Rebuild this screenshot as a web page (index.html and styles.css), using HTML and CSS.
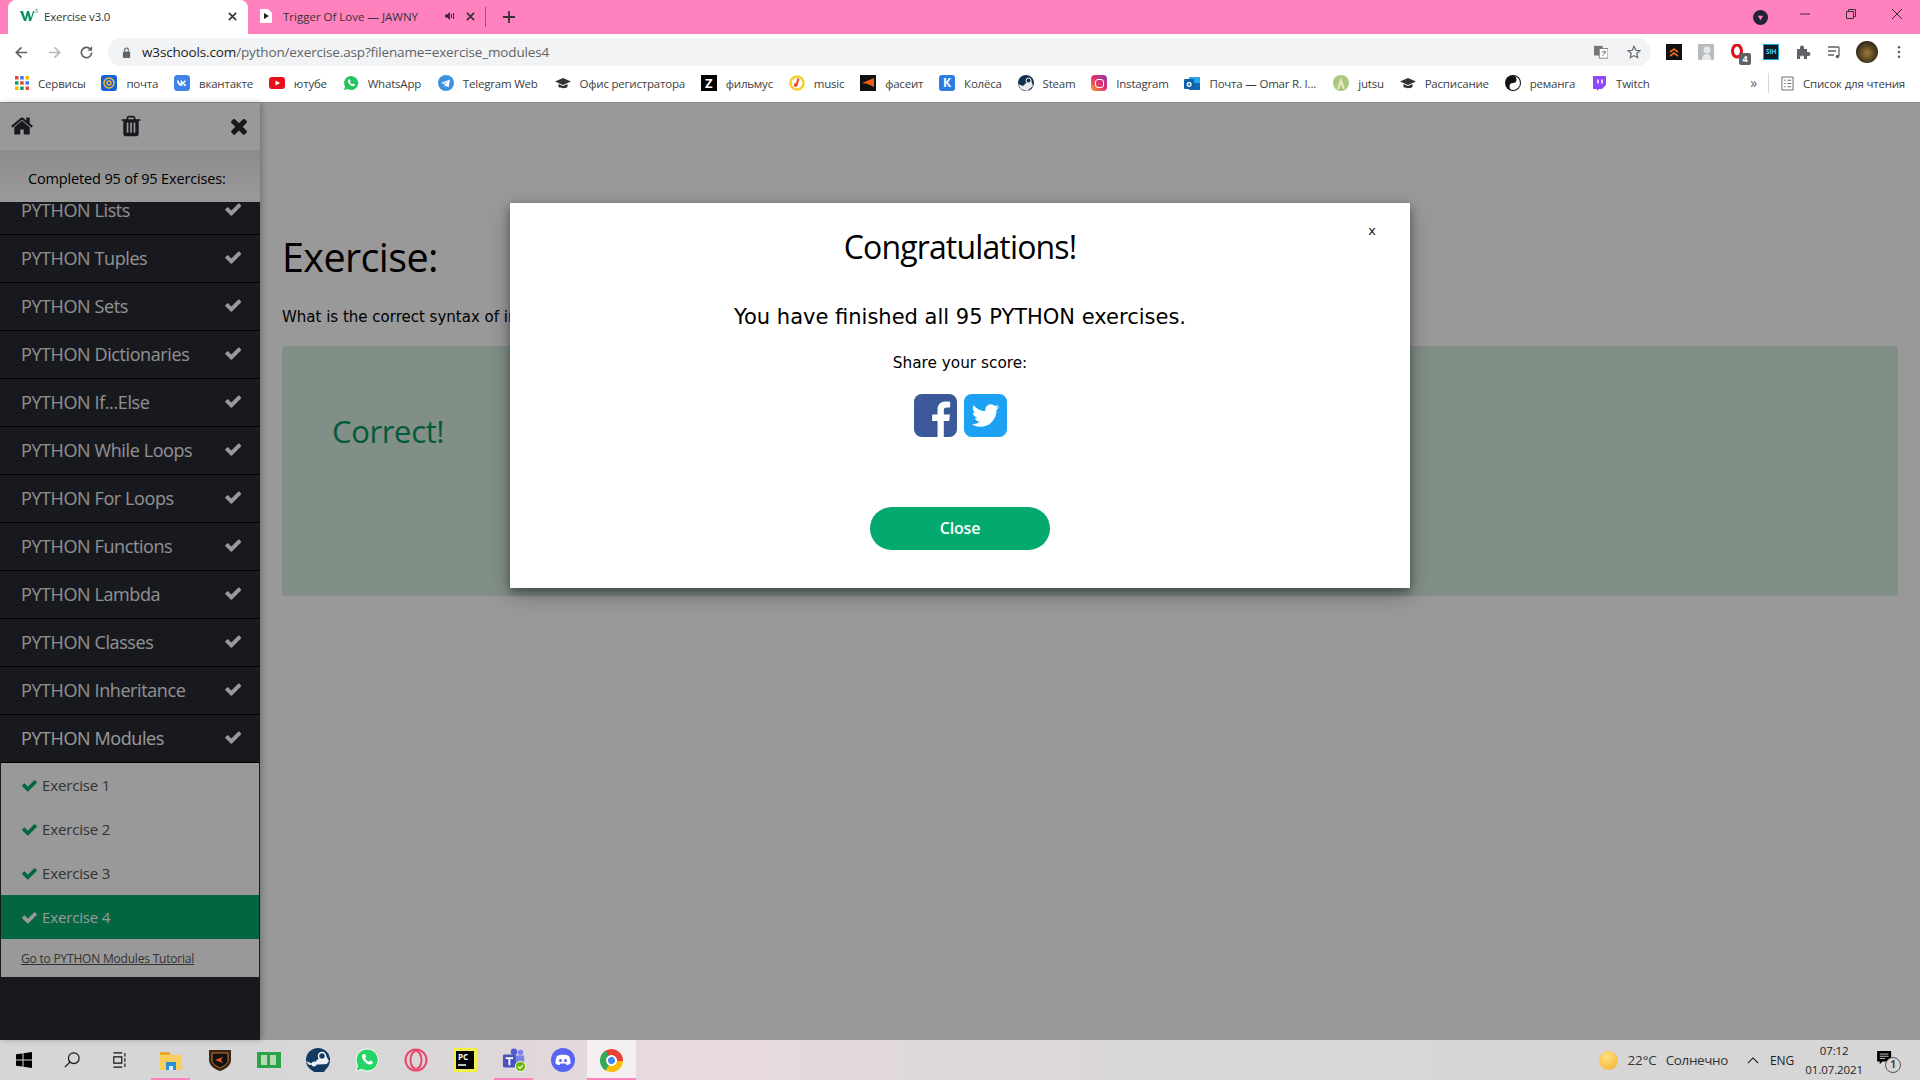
FILE: index.html
```html
<!DOCTYPE html>
<html lang="ru">
<head>
<meta charset="utf-8">
<title>Exercise v3.0</title>
<link rel="stylesheet" href="styles.css">
</head>
<body>
<svg class="defs" width="0" height="0">
  <symbol id="i-check" viewBox="0 0 1792 1792"><path d="M1671 566q0 40-28 68l-724 724-136 136q-28 28-68 28t-68-28l-136-136-362-362q-28-28-28-68t28-68l136-136q28-28 68-28t68 28l294 295 656-657q28-28 68-28t68 28l136 136q28 28 28 68z"/></symbol>
  <symbol id="i-times" viewBox="0 0 1792 1792"><path d="M1490 1322q0 40-28 68l-136 136q-28 28-68 28t-68-28l-294-294-294 294q-28 28-68 28t-68-28l-136-136q-28-28-28-68t28-68l294-294-294-294q-28-28-28-68t28-68l136-136q28-28 68-28t68 28l294 294 294-294q28-28 68-28t68 28l136 136q28 28 28 68t-28 68l-294 294 294 294q28 28 28 68z"/></symbol>
  <symbol id="i-home" viewBox="0 0 1792 1792"><path d="M1472 992v480q0 26-19 45t-45 19h-384v-384h-256v384h-384q-26 0-45-19t-19-45v-480q0-1 .5-3t.5-3l575-474 575 474q1 2 1 6zm223-69l-62 74q-8 9-21 11h-3q-13 0-21-7l-692-577-692 577q-12 8-24 7-13-2-21-11l-62-74q-8-10-7-23.500t11-21.500l719-599q32-26 76-26t76 26l244 204v-195q0-14 9-23t23-9h192q14 0 23 9t9 23v408l219 182q10 8 11 21.500t-7 23.500z"/></symbol>
  <symbol id="i-trash" viewBox="0 0 1792 1792"><path d="M704 1376v-704q0-14-9-23t-23-9h-64q-14 0-23 9t-9 23v704q0 14 9 23t23 9h64q14 0 23-9t9-23zm256 0v-704q0-14-9-23t-23-9h-64q-14 0-23 9t-9 23v704q0 14 9 23t23 9h64q14 0 23-9t9-23zm256 0v-704q0-14-9-23t-23-9h-64q-14 0-23 9t-9 23v704q0 14 9 23t23 9h64q14 0 23-9t9-23zm-544-992h448l-48-117q-7-9-17-11h-317q-10 2-17 11zm928 32v64q0 14-9 23t-23 9h-96v948q0 83-47 143.500t-113 60.500h-832q-66 0-113-58.500t-47-141.500v-952h-96q-14 0-23-9t-9-23v-64q0-14 9-23t23-9h309l70-167q15-37 54-63t79-26h320q40 0 79 26t54 63l70 167h309q14 0 23 9t9 23z"/></symbol>
  <symbol id="i-bird" viewBox="0 0 1792 1792"><path d="M1684 408q-67 98-162 167 1 14 1 42 0 130-38 259.500t-115.500 248.500-184.500 210.500-258 146-323 54.500q-271 0-496-145 35 4 78 4 225 0 401-138-105-2-188-64.500t-114-159.500q33 5 61 5 43 0 85-11-112-23-185.500-111.500t-73.500-205.500v-4q68 38 146 41-66-44-105-115t-39-154q0-88 44-163 121 149 294.500 238.500t371.500 99.500q-8-38-8-74 0-134 94.500-228.500t228.500-94.500q140 0 236 102 109-21 205-78-37 115-142 178 91-10 182-49z"/></symbol>
  <symbol id="i-cap" viewBox="0 0 16 16"><path d="M8 3 0 6.500 8 10l8-3.500z"/><path d="M3.500 9v3c2 1.600 7 1.600 9 0V9L8 11z"/></symbol>
</svg>

<div class="browser">
  <header class="tabstrip">
    <div class="tab tab-active">
      <svg class="fav" viewBox="0 0 18 16"><path d="M0 3h3l2 7 2-7h2l2 7 2-7h1.500L11 13H9L8 7l-2 6H4z" fill="#0a8f5f"/><text x="14.500" y="5" class="sup">3</text></svg>
      <span class="tab-title">Exercise v3.0</span>
      <svg class="tab-x" viewBox="0 0 10 10"><path d="M1 1l8 8M9 1l-8 8"/></svg>
    </div>
    <div class="tab tab-other">
      <svg class="fav-doc" viewBox="0 0 14 16"><path d="M2 1h7l4 4v9a1 1 0 0 1-1 1H2a1 1 0 0 1-1-1V2a1 1 0 0 1 1-1z" fill="#fff"/><path d="M5 5l5 3-5 3z" fill="#222"/></svg>
      <span class="tab-title wide">Trigger Of Love — JAWNY</span>
      <svg class="speaker" viewBox="0 0 10 10"><path d="M0 3.500h2L5 1v8L2 6.500H0z" fill="#333"/><path d="M6.500 3v4M8.500 2v6" stroke="#333" fill="none"/></svg>
      <svg class="tab-x" viewBox="0 0 10 10"><path d="M1 1l8 8M9 1l-8 8"/></svg>
    </div>
    <span class="tab-sep"></span>
    <svg class="plus" viewBox="0 0 12 12"><path d="M6 0v12M0 6h12"/></svg>
    <div class="win-controls">
      <span class="profile-dot"><svg viewBox="0 0 10 10"><path d="M2 3h6L5 8z" fill="#ff82bf"/></svg></span>
      <svg class="win-btn" viewBox="0 0 12 12"><path d="M1 6h10"/></svg>
      <svg class="win-btn" viewBox="0 0 12 12"><path d="M1.500 3.500h7v7h-7zM3.500 3.500v-2h7v7h-2"/></svg>
      <svg class="win-btn" viewBox="0 0 12 12"><path d="M1 1l10 10M11 1L1 11"/></svg>
    </div>
  </header>

  <div class="toolbar">
    <svg class="nav" viewBox="0 0 16 16"><path d="M14 8H3M8 2.500 2.500 8 8 13.500"/></svg>
    <svg class="nav nav-off" viewBox="0 0 16 16"><path d="M2 8h11M8 2.500 13.500 8 8 13.500"/></svg>
    <svg class="nav" viewBox="0 0 16 16"><path d="M13.500 8A5.500 5.500 0 1 1 12 4.200"/><path class="solid" d="M14 1v5H9z"/></svg>
    <div class="omnibox">
      <svg class="lock" viewBox="0 0 10 12"><path d="M1 5h8v7H1z" fill="#5f6368"/><path d="M3 5V3a2 2 0 0 1 4 0v2" fill="none" stroke="#5f6368" stroke-width="1.300"/></svg>
      <span class="url"><b>w3schools.com</b>/python/exercise.asp?filename=exercise_modules4</span>
      <span class="omni-right">
        <svg class="translate" viewBox="0 0 16 16"><rect x="0" y="1" width="10" height="11" fill="#777"/><rect x="6" y="4" width="10" height="11" fill="#fff" stroke="#777"/><path d="M9 8h5M11.500 6.500v1.500M13 8c-.5 2-2 3.500-3.500 4" stroke="#666" fill="none"/></svg>
        <svg class="star" viewBox="0 0 16 16"><path d="M8 1.500l2 4.500 4.800.5-3.600 3.200 1 4.800L8 12.100l-4.200 2.400 1-4.800L1.200 6.500 6 6z"/></svg>
      </span>
    </div>
    <div class="exts">
      <span class="ext ext-black"><svg viewBox="0 0 16 16"><path d="M4 8l4-3 4 3M4 12l4-3 4 3" fill="none" stroke="#e8691c" stroke-width="1.600"/></svg></span>
      <span class="ext ext-grey"><svg viewBox="0 0 16 16"><rect width="16" height="16" rx="1" fill="#b9bcbf"/><circle cx="9" cy="6" r="3.500" fill="#e6e8ea"/><path d="M4 16c0-5 3-6 5-6s4 2 4 6z" fill="#e6e8ea"/></svg></span>
      <span class="ext ext-opera"><svg viewBox="0 0 16 16"><ellipse cx="7" cy="7" rx="4.500" ry="6" fill="none" stroke="#e0101a" stroke-width="3"/></svg><span class="ext-badge">4</span></span>
      <span class="ext ext-sih">SIH</span>
      <svg class="ext puzzle" viewBox="0 0 16 16"><path d="M2 5h3V3.500a2 2 0 0 1 4 0V5h3v3h1.500a2 2 0 0 1 0 4H12v3H9v-1.500a2 2 0 0 0-4 0V15H2z" fill="#5f6368"/></svg>
      <svg class="ext queue" viewBox="0 0 16 16"><path d="M1 3h11M1 7h8M1 11h6M12 3v9" fill="none" stroke="#5f6368" stroke-width="1.300"/><circle cx="10.500" cy="12.500" r="1.800" fill="#5f6368"/></svg>
      <span class="avatar"></span>
      <svg class="ext kebab" viewBox="0 0 4 16"><circle cx="2" cy="2.500" r="1.500"/><circle cx="2" cy="8" r="1.500"/><circle cx="2" cy="13.500" r="1.500"/></svg>
    </div>
  </div>

  <nav class="bookmarks">
    <a class="bm b-servisy"><svg class="bi" viewBox="0 0 14 14"><g><rect width="3.500" height="3.500" fill="#e8453c"/><rect x="5.200" width="3.500" height="3.500" fill="#3c7df0"/><rect x="10.500" width="3.500" height="3.500" fill="#f4b400"/><rect y="5.200" width="3.500" height="3.500" fill="#0f9d58"/><rect x="5.200" y="5.200" width="3.500" height="3.500" fill="#e8453c"/><rect x="10.500" y="5.200" width="3.500" height="3.500" fill="#3c7df0"/><rect y="10.500" width="3.500" height="3.500" fill="#f4b400"/><rect x="5.200" y="10.500" width="3.500" height="3.500" fill="#0f9d58"/><rect x="10.500" y="10.500" width="3.500" height="3.500" fill="#e8453c"/></g></svg><span>Сервисы</span></a>
    <a class="bm b-pochta"><svg class="bi" viewBox="0 0 16 16"><rect width="16" height="16" rx="3" fill="#1463d6"/><circle cx="8" cy="8" r="5" fill="none" stroke="#f5b73d" stroke-width="1.500"/><circle cx="8" cy="8" r="2" fill="none" stroke="#f5b73d" stroke-width="1.300"/></svg><span>почта</span></a>
    <a class="bm b-vk"><svg class="bi" viewBox="0 0 16 16"><rect width="16" height="16" rx="3.500" fill="#3f83e8"/><path d="M3 5.500h1.700c.3 2 1.200 3 2 3.200V5.500h1.600v2c.8-.1 1.500-1 1.900-2h1.600c-.3 1.300-1.100 2.300-1.800 2.800.8.400 1.700 1.200 2.200 2.700h-1.800c-.4-1-1.200-1.800-2.100-1.900V11H7.700C5 11 3.200 8.800 3 5.500z" fill="#fff"/></svg><span>вкантакте</span></a>
    <a class="bm b-yt"><svg class="bi" viewBox="0 0 16 16"><rect y="2" width="16" height="12" rx="3" fill="#e5101c"/><path d="M6.500 5.500 11 8l-4.500 2.500z" fill="#fff"/></svg><span>ютубе</span></a>
    <a class="bm b-wa"><svg class="bi" viewBox="0 0 16 16"><path d="M8 1a7 7 0 0 0-6 10.500L1 15l3.600-1A7 7 0 1 0 8 1z" fill="#25c45f"/><path d="M5.500 4.500c-1 1-.8 2.500.4 4s3 2.800 4.400 2.700c1 0 1.800-1 1.700-1.700l-1.700-1-.8.800c-1-.3-2-1.300-2.500-2.400l.8-.8-.9-1.700z" fill="#fff"/></svg><span>WhatsApp</span></a>
    <a class="bm b-tg"><svg class="bi" viewBox="0 0 16 16"><circle cx="8" cy="8" r="8" fill="#3b93df"/><path d="M3 8l9-3.500-1.500 8L8 10.500 6.700 12l-.3-2.500 4-3.500-5 3z" fill="#fff"/></svg><span>Telegram Web</span></a>
    <a class="bm b-office"><svg class="bi" viewBox="0 0 16 16" fill="#333"><use href="#i-cap"/></svg><span>Офис регистратора</span></a>
    <a class="bm b-z"><span class="bi bi-z">Z</span><span>фильмус</span></a>
    <a class="bm b-music"><svg class="bi" viewBox="0 0 16 16"><circle cx="8" cy="8" r="6.500" fill="#fff" stroke="#f5cf2f" stroke-width="2.500"/><path d="M8 11.500a2 2 0 1 1-1-3.500L8.500 3l2 1-1.500 5z" fill="#ef4b33"/></svg><span>music</span></a>
    <a class="bm b-faceit"><svg class="bi" viewBox="0 0 16 16"><rect width="16" height="16" fill="#111"/><path d="M14 3v9L8 9 2 8z" fill="#ee5f14"/></svg><span>фасеит</span></a>
    <a class="bm b-kolesa"><span class="bi bi-k">К</span><span>Колёса</span></a>
    <a class="bm b-steam"><svg class="bi" viewBox="0 0 16 16"><circle cx="8" cy="8" r="8" fill="#14304f"/><path d="M0 9l5 2 3-3 5-3 2 6-6 5-6-2z" fill="#fff" opacity=".9"/><circle cx="10.500" cy="5.500" r="2.500" fill="#14304f" stroke="#fff"/></svg><span>Steam</span></a>
    <a class="bm b-insta"><span class="bi bi-insta"><span></span></span><span>Instagram</span></a>
    <a class="bm b-outlook"><svg class="bi" viewBox="0 0 16 16"><rect x="5" y="2" width="11" height="12" fill="#28a8ea"/><rect x="5" y="8" width="11" height="7" fill="#0d6ab8"/><rect y="4" width="10" height="10" rx="1" fill="#0e5ea8"/><text x="5" y="12" class="oltext">o</text></svg><span class="ol-name">Почта — Omar R. I...</span></a>
    <a class="bm b-jutsu"><svg class="bi" viewBox="0 0 16 16"><circle cx="8" cy="8" r="8" fill="#a9c97a"/><path d="M8 2 4 14h2l2-5 2 5h2z" fill="#efe6c8"/></svg><span>jutsu</span></a>
    <a class="bm b-rasp"><svg class="bi" viewBox="0 0 16 16" fill="#333"><use href="#i-cap"/></svg><span>Расписание</span></a>
    <a class="bm b-remanga"><svg class="bi" viewBox="0 0 16 16"><circle cx="8" cy="8" r="8" fill="#111"/><path d="M8 1a3.500 3.500 0 0 1 0 7 3.500 3.500 0 0 0 0 7A7 7 0 0 0 8 1z" fill="#fff"/></svg><span>реманга</span></a>
    <a class="bm b-twitch"><svg class="bi" viewBox="0 0 16 16"><path d="M2 1h13v9l-4 4H8l-2 2v-2H2z" fill="#9146ff"/><path d="M7 4.500v4M11 4.500v4" stroke="#fff" stroke-width="1.500"/></svg><span>Twitch</span></a>
    <span class="bm-more">»</span>
    <span class="bm-sep"></span>
    <a class="bm b-reader"><svg class="bi reader" viewBox="0 0 14 16"><path d="M1 1h12v14H1zM3.500 4.500H5M7 4.500h4M3.500 8H5M7 8h4M3.500 11.500H5M7 11.500h4" fill="none" stroke="#5f6368"/></svg><span>Список для чтения</span></a>
  </nav>

  <div class="page">
    <aside class="sidebar">
      <div class="side-tools">
        <svg class="tool"><use href="#i-home"/></svg>
        <svg class="tool"><use href="#i-trash"/></svg>
        <svg class="tool"><use href="#i-times"/></svg>
      </div>
      <div class="side-progress">Completed 95 of 95 Exercises:</div>
      <ul class="chapters">
        <li class="chapter">PYTHON Lists<svg class="chk"><use href="#i-check"/></svg></li>
        <li class="chapter">PYTHON Tuples<svg class="chk"><use href="#i-check"/></svg></li>
        <li class="chapter">PYTHON Sets<svg class="chk"><use href="#i-check"/></svg></li>
        <li class="chapter">PYTHON Dictionaries<svg class="chk"><use href="#i-check"/></svg></li>
        <li class="chapter">PYTHON If...Else<svg class="chk"><use href="#i-check"/></svg></li>
        <li class="chapter">PYTHON While Loops<svg class="chk"><use href="#i-check"/></svg></li>
        <li class="chapter">PYTHON For Loops<svg class="chk"><use href="#i-check"/></svg></li>
        <li class="chapter">PYTHON Functions<svg class="chk"><use href="#i-check"/></svg></li>
        <li class="chapter">PYTHON Lambda<svg class="chk"><use href="#i-check"/></svg></li>
        <li class="chapter">PYTHON Classes<svg class="chk"><use href="#i-check"/></svg></li>
        <li class="chapter">PYTHON Inheritance<svg class="chk"><use href="#i-check"/></svg></li>
        <li class="chapter chapter-open">PYTHON Modules<svg class="chk"><use href="#i-check"/></svg></li>
      </ul>
      <div class="subs">
        <div class="sub"><svg class="subchk"><use href="#i-check"/></svg>Exercise 1</div>
        <div class="sub"><svg class="subchk"><use href="#i-check"/></svg>Exercise 2</div>
        <div class="sub"><svg class="subchk"><use href="#i-check"/></svg>Exercise 3</div>
        <div class="sub sub-active"><svg class="subchk"><use href="#i-check"/></svg>Exercise 4</div>
        <a class="sub-link">Go to PYTHON Modules Tutorial</a>
      </div>
    </aside>
    <main class="main">
      <h1 class="ex-title">Exercise:</h1>
      <p class="ex-q">What is the correct syntax of importing only the person1 dictionary of the "mymodule" module?</p>
      <div class="ex-box"><h2 class="ex-ok">Correct!</h2></div>
    </main>
    <div class="overlay">
      <section class="modal">
        <span class="modal-x">x</span>
        <h2 class="m-title">Congratulations!</h2>
        <p class="m-text">You have finished all 95 PYTHON exercises.</p>
        <p class="m-share">Share your score:</p>
        <div class="m-icons">
          <svg class="soc" viewBox="0 0 44 44"><rect width="44" height="44" rx="8" fill="#3b5998"/><path d="M30.500 44V27.500h5.500l.8-6.500h-6.300v-4c0-1.900.6-3.100 3.200-3.100h3.300V8.100c-.6-.1-2.600-.3-4.800-.3-4.800 0-8.100 2.900-8.100 8.300V21h-5.500v6.500h5.500V44z" fill="#fff"/></svg>
          <svg class="soc" viewBox="0 0 44 44"><rect width="44" height="44" rx="8" fill="#1da1f2"/><svg x="6" y="6" width="32" height="32" fill="#fff"><use href="#i-bird"/></svg></svg>
        </div>
        <button class="m-close">Close</button>
      </section>
    </div>
  </div>

  <footer class="taskbar">
    <div class="tile t-s"><svg class="ti" viewBox="0 0 16 16"><path d="M0 2.300 6.500 1.400V7.500H0zM7.500 1.300 16 0v7.500H7.500zM0 8.500h6.500v6.100L0 13.700zM7.500 8.500H16V16l-8.500-1.200z" fill="#000"/></svg></div>
    <div class="tile t-s"><svg class="ti" viewBox="0 0 18 18"><circle cx="11" cy="7" r="6" fill="none" stroke="#111" stroke-width="1.300"/><path d="M6.500 11.500 1 17" stroke="#111" stroke-width="1.300"/></svg></div>
    <div class="tile t-s t-last"><svg class="ti" viewBox="0 0 18 18"><path d="M1.500 1h10M1.500 17h10M2 5.500h9v7H2zM14.500 1v4M14.500 7v4M14.500 13v4" fill="none" stroke="#111" stroke-width="1.300"/></svg></div>
    <div class="tile t-on"><svg class="ti big" viewBox="0 0 24 24"><path d="M1 4h9l2 3H1z" fill="#e8a92a"/><path d="M1 7h22v15H1z" fill="#f8cf5d"/><path d="M7 14h10v8H7z" fill="#2a8fd8"/><path d="M10 18h4v4h-4z" fill="#d8effc"/></svg></div>
    <div class="tile"><svg class="ti big" viewBox="0 0 24 24"><path d="M1 2h22v10c0 5-5 9-11 11C6 21 1 17 1 12z" fill="#3a2413"/><path d="M4 5h16v7c0 4-4 6-8 8-4-2-8-4-8-8z" fill="#111" stroke="#c07a2a"/><path d="M7 12l8-3-2 3 2 3z" fill="#e85a1a"/></svg></div>
    <div class="tile"><svg class="ti big" viewBox="0 0 24 16"><rect width="24" height="16" fill="#2ea44a"/><rect x="4" y="3" width="6" height="10" fill="#b9d8b4"/><rect x="13" y="3" width="6" height="10" fill="#b9d8b4"/></svg></div>
    <div class="tile"><svg class="ti big" viewBox="0 0 24 24"><circle cx="12" cy="12" r="12" fill="#123a63"/><path d="M0 13l7 3 4-4 8-6 4 7-8 11H8z" fill="#e9f0f5"/><path d="M1 17l7 7h10l5-8z" fill="#123a63"/><circle cx="16" cy="8" r="3.500" fill="#123a63" stroke="#fff" stroke-width="1.500"/><circle cx="8" cy="16" r="2.500" fill="#e9f0f5"/></svg></div>
    <div class="tile"><svg class="ti big" viewBox="0 0 24 24"><path d="M12 1a11 11 0 0 0-9.500 16.500L1 23l5.700-1.500A11 11 0 1 0 12 1z" fill="#25d366" stroke="#fff"/><path d="M8 6c-1.500 1.500-1.200 4 .6 6.500s4.500 4.200 6.800 4c1.500-.1 2.700-1.500 2.600-2.600l-2.700-1.500-1.200 1.300c-1.500-.5-3.200-2-4-3.800l1.200-1.200L10 6z" fill="#fff"/></svg></div>
    <div class="tile"><svg class="ti big" viewBox="0 0 24 24"><circle cx="12" cy="12" r="10.500" fill="none" stroke="#e9486c" stroke-width="2"/><ellipse cx="12" cy="12" rx="5.500" ry="9" fill="none" stroke="#e9486c" stroke-width="2"/></svg></div>
    <div class="tile"><svg class="ti big" viewBox="0 0 24 24"><rect width="24" height="24" fill="#f2ee4a"/><rect x="3" y="3" width="18" height="18" fill="#000"/><text x="5" y="12" class="pc">PC</text><path d="M5 17h8" stroke="#fff" stroke-width="1.500"/></svg></div>
    <div class="tile t-on"><svg class="ti big" viewBox="0 0 26 26"><circle cx="20" cy="5" r="3" fill="#7b83eb"/><circle cx="13" cy="4" r="3.500" fill="#5059c9"/><path d="M14 8h10v9a5 5 0 0 1-10 0z" fill="#7b83eb"/><rect x="1" y="7" width="14" height="14" rx="1.500" fill="#4b53bc"/><path d="M4 10h8v1.800H9v7H7v-7H4z" fill="#fff"/><circle cx="20" cy="20" r="5.500" fill="#6bb700" stroke="#fff"/><path d="M17.500 20l2 2 3-3.500" stroke="#fff" fill="none" stroke-width="1.300"/></svg></div>
    <div class="tile"><svg class="ti big" viewBox="0 0 24 24"><circle cx="12" cy="12" r="12" fill="#5865f2"/><path d="M6 8c3-1.700 9-1.700 12 0 1.200 2.500 1.700 5 1.500 7.500-1.500 1-3 1.500-4 1.500l-1-1.500h-5l-1 1.500c-1 0-2.500-.5-4-1.500C4.300 13 4.800 10.500 6 8z" fill="#fff"/><circle cx="9.500" cy="12.500" r="1.500" fill="#5865f2"/><circle cx="14.500" cy="12.500" r="1.500" fill="#5865f2"/></svg></div>
    <div class="tile t-on t-current"><span class="chrome"><span></span></span></div>
    <div class="tray">
      <span class="sun"></span>
      <span class="temp">22°C</span>
      <span class="weather">Солнечно</span>
      <svg class="caret" viewBox="0 0 14 8"><path d="M1 7l6-6 6 6"/></svg>
      <span class="lang">ENG</span>
      <span class="clock"><span>07:12</span><span>01.07.2021</span></span>
      <span class="notif"><svg viewBox="0 0 18 16"><path d="M0 0h16v12H6l-3 3v-3H0z" fill="#000"/><path d="M3 3.500h10M3 6h10M3 8.500h6" stroke="#ddd"/></svg><span class="notif-n">1</span></span>
    </div>
  </footer>
</div>
</body>
</html>
```

FILE: styles.css
```css
* { box-sizing: border-box; }
html, body { margin: 0; height: 100%; overflow: hidden; }
body { font-family: "Open Sans", "Noto Sans", sans-serif; color: #000; }
.defs { position: absolute; }
.browser { display: flex; flex-direction: column; height: 1080px; width: 1920px; }

/* tab strip */
.tabstrip { height: 34px; background: #ff82bf; display: flex; align-items: stretch; flex: none; padding-left: 8px; }
.tab { width: 240px; display: flex; align-items: center; font-size: 11.5px; letter-spacing: -.2px; color: #333; padding-bottom: 2px; }
.tab-active { background: #fff; border-radius: 8px 8px 0 0; padding: 0 11px 2px 12px; }
.tab-other { width: 238px; padding: 0 0 2px 11px; }
.fav { width: 18px; height: 16px; margin-right: 6px; flex: none; }
.sup { font-size: 6px; fill: #0a8f5f; }
.fav-doc { width: 14px; height: 16px; margin-right: 10px; flex: none; }
.tab-title { flex: 1; }
.tab-title.wide { flex: none; width: 162px; letter-spacing: 0; white-space: nowrap; }
.speaker { width: 10px; height: 10px; flex: none; }
.tab-x { width: 9px; height: 9px; margin-left: auto; flex: none; fill: none; stroke: #333; stroke-width: 1.800; }
.tab-other .tab-x { margin-left: 11px; }
.tab-sep { width: 1px; height: 20px; background: #8a5a72; align-self: center; margin-left: -1px; flex: none; }
.plus { width: 12px; height: 12px; align-self: center; margin-left: 17px; stroke: #333; stroke-width: 1.800; fill: none; flex: none; }
.win-controls { margin-left: auto; display: flex; align-items: flex-start; padding: 8px 17px 0 0; gap: 34px; }
.profile-dot { width: 15px; height: 15px; border-radius: 50%; background: #232338; display: flex; align-items: center; justify-content: center; margin: 2px -3px 0 0; }
.profile-dot svg { width: 9px; height: 9px; }
.win-btn { width: 12px; height: 12px; fill: none; stroke: #333; stroke-width: 1; }

/* toolbar */
.toolbar { height: 32px; background: #fff; display: flex; align-items: flex-end; flex: none; padding-left: 14px; }
.nav { width: 15px; height: 15px; fill: none; stroke: #5f6368; stroke-width: 1.800; margin: 0 17.500px 6px 0; flex: none; }
.nav .solid { fill: #5f6368; stroke: none; }
.nav-off { stroke: #b5b8bb; }
.omnibox { width: 1543px; height: 28px; margin-left: -3.500px; background: #f1f3f4; border-radius: 14px; display: flex; align-items: center; padding: 0 10px 0 14px; flex: none; margin-right: 15px; }
.lock { width: 9px; height: 11px; margin-right: 11px; flex: none; }
.url { font-size: 13.500px; letter-spacing: -.15px; color: #5f6368; white-space: nowrap; }
.url b { font-weight: 400; color: #202124; }
.omni-right { margin-left: auto; display: flex; align-items: center; gap: 19px; }
.translate { width: 14px; height: 14px; }
.star { width: 14px; height: 14px; fill: none; stroke: #5f6368; stroke-width: 1.300; }
.exts { display: flex; align-items: center; height: 28px; }
.ext { width: 16px; height: 16px; flex: none; margin-right: 16px; display: block; }
.ext svg { display: block; width: 16px; height: 16px; }
.ext-black { background: #111; }
.ext-opera { position: relative; margin-right: 17px; }
.ext-badge { position: absolute; right: -5px; bottom: -5px; width: 12px; height: 12px; background: #5f6368; border-radius: 2px; color: #fff; font-size: 9px; font-weight: 700; line-height: 12px; text-align: center; }
.ext-sih { background: #111a24; color: #3fd0ee; font-size: 7px; font-weight: 700; line-height: 14px; text-align: center; border: 1px solid #18a6cc; letter-spacing: -.3px; }
.queue { margin-right: 13px; }
.avatar { width: 22px; height: 22px; border-radius: 50%; background: radial-gradient(circle at 50% 55%, #a37a3f 0, #5f4a22 40%, #2a2417 75%); margin-right: 19px; flex: none; }
.kebab { width: 4px; height: 14px; fill: #5f6368; margin: 0; }

/* bookmarks */
.bookmarks { height: 37px; background: #fff; border-bottom: 1px solid #8a8a8a; display: flex; align-items: center; padding: 0 0 2px 15px; flex: none; font-size: 11.500px; letter-spacing: -.2px; color: #3c4043; white-space: nowrap; }
.bm { display: flex; align-items: center; gap: 9px; margin-right: 15.800px; }
.bi { width: 16px; height: 16px; flex: none; display: block; }
.b-servisy .bi { width: 14px; height: 14px; }
.b-tg, .b-office { margin-left: 1px; }
.bi-z { background: #000; color: #fff; font-weight: 700; font-size: 13px; line-height: 16px; text-align: center; letter-spacing: 0; }
.bi-k { background: #2b7de0; color: #fff; font-weight: 700; font-size: 12px; line-height: 16px; text-align: center; border-radius: 3px; letter-spacing: 0; }
.bi-insta { border-radius: 4px; background: linear-gradient(45deg, #f9a13a, #e1306c 50%, #8a3ab9); display: flex; align-items: center; justify-content: center; }
.bi-insta span { width: 9px; height: 9px; border: 1.500px solid #fff; border-radius: 3px; display: block; }
.oltext { font-size: 9px; font-weight: 700; fill: #fff; text-anchor: middle; }
.ol-name { width: 108px; overflow: hidden; }
.b-twitch { margin-right: 0; }
.bm-more { margin-left: auto; font-size: 14px; color: #5f6368; margin-right: 11px; line-height: 1; }
.bm-sep { width: 1px; height: 20px; background: #d8d8d8; margin-right: 12px; }
.b-reader { margin-right: 15px; }
.reader { width: 13px; height: 15px; }

/* page */
.page { flex: 1; min-height: 0; position: relative; display: flex; background: #fff; }
.sidebar { width: 260px; flex: none; background: #282a35; display: flex; flex-direction: column; box-shadow: 2px 0 6px rgba(0,0,0,.25); position: relative; }
.side-tools { height: 47px; background: #fff; display: flex; align-items: center; justify-content: space-between; padding: 0 9px 1px 10px; flex: none; }
.tool { width: 24px; height: 24px; fill: #282a35; display: block; }
.side-progress { height: 52px; flex: none; background: linear-gradient(#e8e8e8, #fff 85%); font-size: 14.500px; letter-spacing: -.15px; color: #000; padding: 19px 0 0 28px; line-height: 20px; white-space: nowrap; }
.chapters { list-style: none; margin: 0; padding: 0; height: 561px; flex: none; overflow: hidden; display: flex; flex-direction: column; justify-content: flex-end; }
.chapter { height: 48px; flex: none; border-bottom: 1px solid #000; display: flex; align-items: center; justify-content: space-between; padding: 0 17.500px 2px 21px; font-size: 18px; letter-spacing: -.4px; color: #f0f0f0; }
.chapter-open { color: #fff; }
.chk { width: 18.500px; height: 18.500px; fill: #fff; flex: none; }
.subs { background: #fff; margin: 0 1px; height: 214px; flex: none; display: flex; flex-direction: column; font-size: 15px; letter-spacing: -.15px; color: #555; }
.sub { height: 44px; flex: none; display: flex; align-items: center; padding-left: 20px; gap: 4px; }
.subchk { width: 17px; height: 17px; fill: #04aa6d; flex: none; }
.sub-active { background: #04aa6d; color: #fff; }
.sub-active .subchk { fill: #fff; }
.sub-link { font-size: 12px; color: #555; text-decoration: underline; padding: 12px 0 0 20px; line-height: 16px; letter-spacing: -.2px; }
.main { flex: 1; min-width: 0; padding: 0 22px; }
.ex-title { font-weight: 400; font-size: 39.500px; letter-spacing: -.6px; line-height: 56px; margin: 126px 0 0; }
.ex-q { font-family: "DejaVu Sans", sans-serif; font-size: 15px; line-height: 20px; margin: 22px 0 0; white-space: nowrap; color: #000; }
.ex-box { margin-top: 19px; height: 250px; background: #d9eee1; border-radius: 3px; padding: 57px 50px 0; }
.ex-ok { margin: 0; font-weight: 400; font-size: 31px; line-height: 56px; letter-spacing: -.35px; color: #059862; }

/* modal */
.overlay { position: absolute; inset: 0; background: rgba(0,0,0,.4); }
.modal { position: absolute; left: 510px; top: 100px; width: 900px; height: 385px; background: #fff; box-shadow: 0 4px 8px rgba(0,0,0,.3), 0 6px 20px rgba(0,0,0,.3); display: flex; flex-direction: column; align-items: center; }
.modal-x { position: absolute; right: 34px; top: 19px; font-family: "DejaVu Sans", sans-serif; font-size: 13px; line-height: 18px; color: #222; }
.m-title { margin: 22px 0 0; font-weight: 400; font-size: 32px; line-height: 44px; letter-spacing: -.85px; }
.m-text { margin: 33px 0 0; font-family: "DejaVu Sans", sans-serif; font-size: 21px; line-height: 30px; }
.m-share { margin: 20.500px 0 0; font-family: "DejaVu Sans", sans-serif; font-size: 15.300px; line-height: 20px; }
.m-icons { display: flex; gap: 7px; margin-top: 21px; height: 43px; padding-left: 1px; }
.soc { width: 43px; height: 43px; display: block; }
.m-close { margin-top: 70px; width: 180px; height: 43px; border: 0; border-radius: 22px; background: #04aa6d; color: #fff; font: 600 16px "Open Sans", sans-serif; letter-spacing: -.2px; padding: 0; }

/* taskbar */
.taskbar { height: 40px; flex: none; display: flex; align-items: stretch; background: linear-gradient(90deg, #d6d6d6 0, #d8d6d6 400px, #e9dadf 680px, #dcd8d9 1000px, #d6d6d6 1560px); }
.tile { width: 49px; display: flex; align-items: center; justify-content: center; flex: none; position: relative; }
.t-s { width: 48px; }
.t-last { margin-right: 2px; }
.t-on::after { content: ""; position: absolute; left: 5px; right: 5px; bottom: 0; height: 2px; background: #ff82bf; }
.t-current { background: #f3eef0; }
.t-current::after { left: 0; right: 0; }
.ti { width: 16px; height: 16px; display: block; }
.ti.big { width: 24px; height: 24px; }
.pc { font-size: 8px; font-weight: 700; fill: #fff; }
.chrome { width: 23px; height: 23px; border-radius: 50%; background: conic-gradient(#ea4335 0 120deg, #fbbc04 120deg 240deg, #34a853 240deg 360deg); display: flex; align-items: center; justify-content: center; transform: rotate(-30deg); }
.chrome span { width: 11px; height: 11px; border-radius: 50%; background: #4285f4; border: 2px solid #fff; }
.tray { margin-left: auto; display: flex; align-items: center; padding-right: 27px; font-size: 13px; color: #222; white-space: nowrap; }
.sun { width: 19px; height: 19px; border-radius: 50%; background: radial-gradient(circle at 40% 30%, #ffe07a, #f6ae2d); margin-right: 11px; position: relative; left: 2px; }
.temp { font-size: 13.500px; letter-spacing: -.1px; color: #333; margin-right: 9px; }
.weather { font-size: 13.500px; letter-spacing: -.4px; color: #333; margin-right: 19px; }
.caret { width: 12px; height: 7px; fill: none; stroke: #111; stroke-width: 1.200; margin-right: 11px; }
.lang { font-size: 12px; margin-right: 11px; }
.clock { display: flex; flex-direction: column; align-items: center; font-size: 11.500px; line-height: 19px; letter-spacing: -.1px; margin-right: 14px; }
.notif { position: relative; width: 16px; height: 14px; display: block; margin-top: -5px; }
.notif svg { width: 16px; height: 14px; display: block; }
.notif-n { position: absolute; left: 8px; top: 6px; width: 16px; height: 16px; border-radius: 50%; background: #d6d6d6; border: 1.500px solid #555; font-size: 10px; font-weight: 700; line-height: 13px; text-align: center; color: #444; }
```
